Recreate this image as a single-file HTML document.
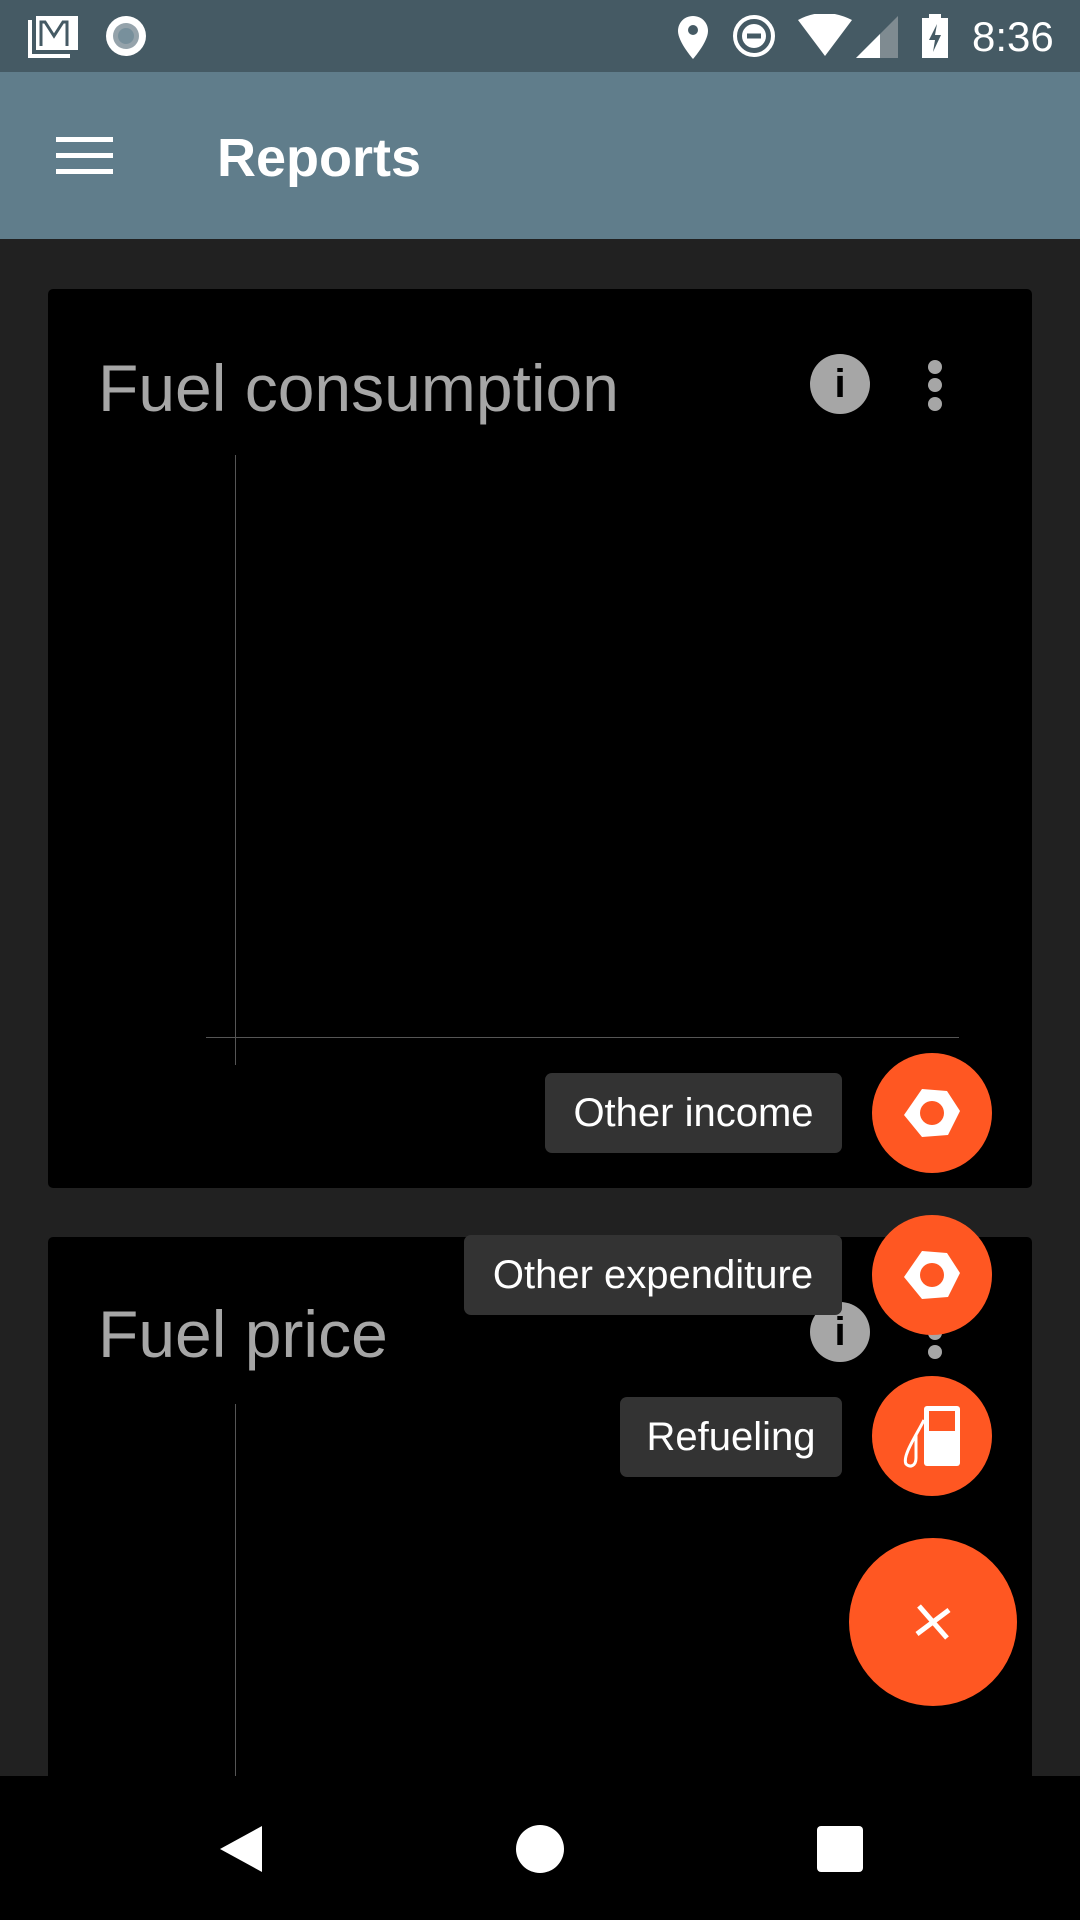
<!DOCTYPE html>
<html style="width:1080px;height:1920px;overflow:hidden"><head><meta charset="utf-8"><style>
*{margin:0;padding:0;box-sizing:border-box}
body{width:1080px;height:1920px;background:#212121;position:relative;overflow:hidden;font-family:"Liberation Sans",sans-serif}
.abs{position:absolute}
.sb{left:0;top:0;width:1080px;height:72px;background:#455A64}
.ab{left:0;top:72px;width:1080px;height:167px;background:#607D8B}
.card{background:#000;border-radius:5px;left:48px;width:984px}
.title{color:#a6a6a6;font-size:66px;left:50px;line-height:70px}
.info{width:60px;height:60px;border-radius:50%;background:#a6a6a6;color:#000;font-weight:bold;font-size:40px;text-align:center;line-height:60px}
.dot{width:14px;height:14px;border-radius:50%;background:#a6a6a6}
.vl{width:1px;background:#555}
.lab{background:#333;border-radius:7px;color:#fff;font-size:40px;height:80px;line-height:80px;text-align:center}
</style></head><body>
<div class="abs sb"></div>
<svg class="abs" style="left:26px;top:14px" width="56" height="46" viewBox="0 0 56 46"><path d="M4 6v36h40" stroke="#fff" stroke-width="4" fill="none"/><rect x="10" y="2" width="42" height="34" fill="#fff"/><path d="M15 32V8h4l9 14 9-14h4v24" stroke="#455A64" stroke-width="3" fill="none"/></svg>
<svg class="abs" style="left:104px;top:14px" width="44" height="44"><circle cx="22" cy="22" r="20" fill="#fff"/><circle cx="22" cy="22" r="13" fill="#95a3ab"/><circle cx="22" cy="22" r="8" fill="#78909c"/></svg>
<svg class="abs" style="left:676px;top:14px" width="34" height="46" viewBox="0 0 34 46"><path d="M17 2C8 2 2 9 2 17c0 11 15 28 15 28s15-17 15-28C32 9 26 2 17 2z" fill="#fff"/><circle cx="17" cy="16" r="5" fill="#455A64"/></svg>
<svg class="abs" style="left:732px;top:14px" width="44" height="44"><circle cx="22" cy="22" r="19" fill="none" stroke="#fff" stroke-width="4"/><circle cx="22" cy="22" r="12" fill="#fff"/><rect x="15" y="19.5" width="14" height="5" fill="#455A64"/></svg>
<svg class="abs" style="left:796px;top:14px" width="60" height="44"><path d="M2 6Q28-8 56 6L29 42z" fill="#fff"/></svg>
<svg class="abs" style="left:854px;top:14px" width="46" height="44"><path d="M44 2V44H2z" fill="#7f8b91"/><path d="M26 20V44H2z" fill="#fff"/></svg>
<svg class="abs" style="left:920px;top:12px" width="30" height="48"><rect x="9" y="2" width="12" height="6" fill="#fff"/><rect x="2" y="6" width="26" height="40" fill="#fff"/><path d="M17 12l-8 16h6l-2 12 8-17h-6z" fill="#455A64"/></svg>
<div class="abs" style="left:972px;top:14px;color:#fff;font-size:42px;line-height:46px">8:36</div>

<div class="abs ab"></div>
<div class="abs" style="left:56px;top:137px;width:57px;height:5px;background:#fff"></div>
<div class="abs" style="left:56px;top:153px;width:57px;height:5px;background:#fff"></div>
<div class="abs" style="left:56px;top:169px;width:57px;height:5px;background:#fff"></div>
<div class="abs" style="left:217px;top:126px;color:#fff;font-size:54px;font-weight:bold;line-height:64px">Reports</div>

<div class="abs card" style="top:289px;height:899px">
  <div class="abs title" style="top:64px">Fuel consumption</div>
  <div class="abs info" style="left:762px;top:65px">i</div>
  <div class="abs dot" style="left:880px;top:71px"></div>
  <div class="abs dot" style="left:880px;top:89px"></div>
  <div class="abs dot" style="left:880px;top:108px"></div>
  <div class="abs vl" style="left:187px;top:166px;height:610px"></div>
  <div class="abs" style="left:158px;top:748px;width:753px;height:1px;background:#555"></div>
</div>
<div class="abs card" style="top:1237px;height:683px">
  <div class="abs title" style="top:62px">Fuel price</div>
  <div class="abs info" style="left:762px;top:65px">i</div>
  <div class="abs dot" style="left:880px;top:71px"></div>
  <div class="abs dot" style="left:880px;top:89px"></div>
  <div class="abs dot" style="left:880px;top:108px"></div>
  <div class="abs vl" style="left:187px;top:167px;height:516px"></div>
</div>

<div class="abs lab" style="left:545px;top:1073px;width:297px">Other income</div>
<div class="abs lab" style="left:464px;top:1235px;width:378px">Other expenditure</div>
<div class="abs lab" style="left:620px;top:1397px;width:222px">Refueling</div>

<svg class="abs" style="left:872px;top:1053px" width="120" height="120" viewBox="0 0 120 120"><circle cx="60" cy="60" r="60" fill="#FF5722"/><path d="M50 36L75 38 88 58 76 82 50 84 32 62z" fill="#fff"/><circle cx="60" cy="60" r="12" fill="#FF5722"/></svg>
<svg class="abs" style="left:872px;top:1215px" width="120" height="120" viewBox="0 0 120 120"><circle cx="60" cy="60" r="60" fill="#FF5722"/><path d="M50 36L75 38 88 58 76 82 50 84 32 62z" fill="#fff"/><circle cx="60" cy="60" r="12" fill="#FF5722"/></svg>
<svg class="abs" style="left:872px;top:1376px" width="120" height="120" viewBox="0 0 120 120"><circle cx="60" cy="60" r="60" fill="#FF5722"/><rect x="52" y="30" width="36" height="60" rx="3" fill="#fff"/><rect x="57" y="35" width="26" height="20" fill="#FF5722"/><path d="M52 44C44 60 30 80 34 88c4 4 10 2 10-6V58" stroke="#fff" stroke-width="3" fill="none"/></svg>
<svg class="abs" style="left:849px;top:1538px" width="168" height="168" viewBox="0 0 168 168"><circle cx="84" cy="84" r="84" fill="#FF5722"/><path d="M70 68L98 100M100 72L68 96" stroke="#fff" stroke-width="5"/></svg>

<div class="abs" style="left:0;top:1776px;width:1080px;height:144px;background:#000"></div>
<svg class="abs" style="left:216px;top:1824px" width="50" height="50"><path d="M46 2V48L4 25z" fill="#fff"/></svg>
<div class="abs" style="left:516px;top:1825px;width:48px;height:48px;border-radius:50%;background:#fff"></div>
<div class="abs" style="left:817px;top:1826px;width:46px;height:46px;border-radius:4px;background:#fff"></div>
</body></html>
